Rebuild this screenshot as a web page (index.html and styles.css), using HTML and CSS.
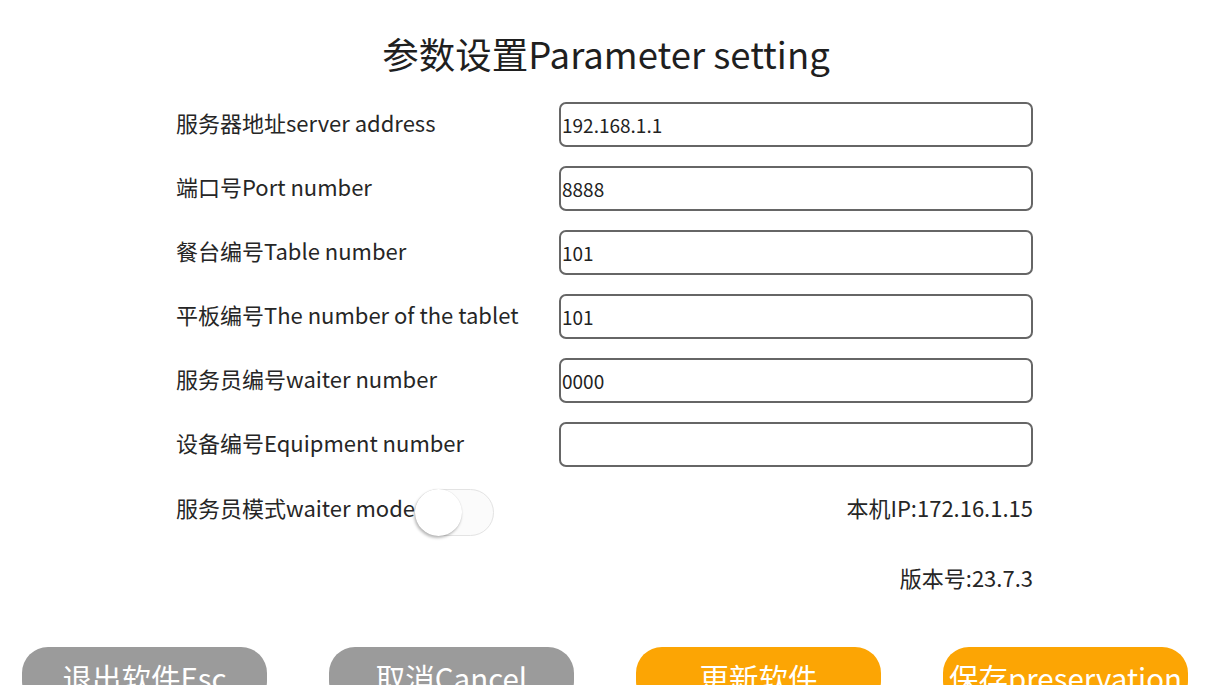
FILE: index.html
```html
<!DOCTYPE html>
<html lang="zh">
<head>
<meta charset="utf-8">
<title>参数设置</title>
<link rel="stylesheet" href="styles.css">
</head>
<body>
<div class="page">
  <h1 class="title">参数设置Parameter setting</h1>
  <div class="form">
    <label class="label">服务器地址server address</label>
    <div class="field">192.168.1.1</div>
    <label class="label">端口号Port number</label>
    <div class="field">8888</div>
    <label class="label">餐台编号Table number</label>
    <div class="field">101</div>
    <label class="label">平板编号The number of the tablet</label>
    <div class="field">101</div>
    <label class="label">服务员编号waiter number</label>
    <div class="field">0000</div>
    <label class="label">设备编号Equipment number</label>
    <div class="field"></div>
  </div>
  <div class="info-row">
    <div class="mode">
      <span class="label">服务员模式waiter mode</span>
      <span class="switch"><span class="thumb"></span></span>
    </div>
    <span class="info">本机IP:172.16.1.15</span>
  </div>
  <div class="version-row">
    <span class="info">版本号:23.7.3</span>
  </div>
  <div class="buttons">
    <button class="btn gray">退出软件Esc</button>
    <button class="btn gray">取消Cancel</button>
    <button class="btn orange">更新软件</button>
    <button class="btn orange">保存preservation</button>
  </div>
</div>
</body>
</html>
```

FILE: styles.css
```css
html, body {
  margin: 0;
  padding: 0;
  background: #ffffff;
}
body {
  width: 1212px;
  height: 685px;
  overflow: hidden;
  font-family: "Noto Sans CJK SC", "Noto Sans", sans-serif;
  color: #222222;
}
.page {
  display: flex;
  flex-direction: column;
}
.title {
  margin: 28px 0 0 0;
  height: 55px;
  line-height: 52px;
  padding-bottom: 3px;
  box-sizing: border-box;
  font-size: 36.5px;
  font-weight: 400;
  text-align: center;
  color: #1f1f1f;
}
.form {
  margin: 19px 0 0 176px;
  width: 857px;
  display: grid;
  grid-template-columns: 383px 474px;
  grid-auto-rows: 45px;
  row-gap: 19px;
  align-items: center;
}
.label {
  font-size: 22px;
  line-height: 30px;
  padding-bottom: 6px;
  color: #262626;
  white-space: nowrap;
}
.field {
  box-sizing: border-box;
  height: 45px;
  border: 2px solid #666666;
  border-radius: 7px;
  padding: 0 0 0 1px;
  font-size: 19px;
  line-height: 41px;
  color: #222222;
}
.info-row {
  margin: 19px 0 0 176px;
  width: 857px;
  height: 45px;
  display: flex;
  align-items: center;
  justify-content: space-between;
}
.mode {
  display: flex;
  align-items: center;
}
.mode .label {
  padding-bottom: 4px;
}
.switch {
  position: relative;
  box-sizing: border-box;
  width: 79px;
  height: 47px;
  border: 1px solid #e3e3e3;
  border-radius: 24px;
  background: #fbfbfb;
  margin-top: 8px;
}
.thumb {
  position: absolute;
  left: -1px;
  top: -1px;
  width: 47px;
  height: 47px;
  border-radius: 50%;
  background: #ffffff;
  box-shadow: -1px 2px 3px rgba(0, 0, 0, 0.28), 0 0 1px rgba(0, 0, 0, 0.15);
}
.info {
  font-size: 22px;
  line-height: 30px;
  padding-bottom: 4px;
  color: #262626;
}
.version-row {
  margin: 25px 0 0 176px;
  width: 857px;
  height: 45px;
  display: flex;
  align-items: center;
  justify-content: flex-end;
}
.buttons {
  margin-top: 46px;
  padding: 0 24px 0 22px;
  display: flex;
  justify-content: space-between;
}
.btn {
  width: 245px;
  height: 60px;
  border: none;
  border-radius: 26px;
  font-family: "Noto Sans CJK SC", "Noto Sans", sans-serif;
  font-size: 29.5px;
  line-height: 60px;
  color: #ffffff;
  padding: 0;
  white-space: nowrap;
}
.gray {
  background: #9b9b9b;
}
.orange {
  background: #fca504;
}
```
